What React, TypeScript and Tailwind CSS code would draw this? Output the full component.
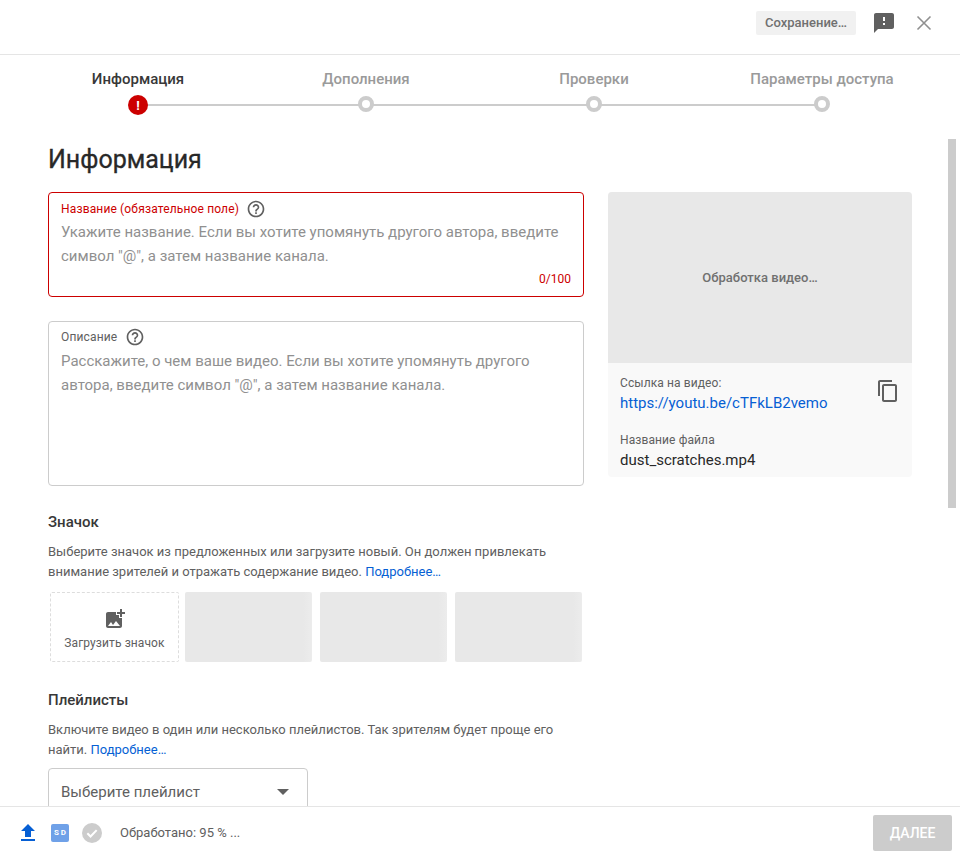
import React from "react";

const steps = ["Информация", "Дополнения", "Проверки", "Параметры доступа"];

function HelpIcon() {
  return (
    <svg width="20" height="20" viewBox="0 0 24 24" fill="#606060">
      <path d="M11 18h2v-2h-2v2zm1-16C6.48 2 2 6.48 2 12s4.48 10 10 10 10-4.48 10-10S17.52 2 12 2zm0 18c-4.41 0-8-3.59-8-8s3.59-8 8-8 8 3.59 8 8-3.59 8-8 8zm0-14c-2.21 0-4 1.79-4 4h2c0-1.1.9-2 2-2s2 .9 2 2c0 2-3 1.75-3 5h2c0-2.25 3-2.5 3-5 0-2.21-1.79-4-4-4z" />
    </svg>
  );
}

function Stepper() {
  return (
    <div className="relative shrink-0 h-[84px] pl-[24px]">
      <div className="absolute left-[138px] top-[49px] w-[684px] h-[2px] bg-[#cccccc]" />
      <div className="relative flex">
        {steps.map((step, i) => (
          <div key={step} className="w-[228px] flex flex-col items-center">
            <div className={`h-[20px] mt-[14px] text-[15px] leading-[20px] font-medium whitespace-nowrap ${i === 0 ? "text-[#383838]" : "text-[#9a9a9a]"}`}>
              {step}
            </div>
            {i === 0 ? (
              <div className="mt-[6px] w-[20px] h-[20px] rounded-full bg-[#cc0000] flex items-center justify-center text-white text-[13px] leading-none font-bold">!</div>
            ) : (
              <div className="mt-[7px] w-[16px] h-[16px] rounded-full border-4 border-[#cccccc] bg-white" />
            )}
          </div>
        ))}
      </div>
    </div>
  );
}

export default function App() {
  return (
    <div className="relative w-[960px] h-[862px] flex flex-col overflow-hidden bg-white font-['Roboto',sans-serif] text-[#282828]">
      {/* top bar */}
      <div className="shrink-0 h-[55px] border-b border-[#e5e5e5] flex items-center justify-end pb-[8px]">
        <div className="w-[100px] h-[24px] mr-[16px] rounded-[2px] bg-[#f1f1f1] text-[#707070] text-[13px] leading-[24px] font-medium text-center">Сохранение…</div>
        <svg className="mr-[16px]" width="24" height="24" viewBox="0 0 24 24" fill="#606060">
          <path d="M20 2H4c-1.1 0-1.99.9-1.99 2L2 22l4-4h14c1.1 0 2-.9 2-2V4c0-1.1-.9-2-2-2zm-7 12h-2v-2h2v2zm0-4h-2V6h2v4z" />
        </svg>
        <svg className="mr-[24px]" width="24" height="24" viewBox="0 0 24 24" stroke="#909090" strokeWidth="1.6" fill="none">
          <path d="M5.5 5.5l13 13M18.5 5.5l-13 13" />
        </svg>
      </div>

      <Stepper />

      {/* form area */}
      <div className="flex-1 min-h-0 overflow-hidden px-[48px]">
        <h1 className="h-[42px] text-[25px] leading-[42px] font-normal [-webkit-text-stroke:0.3px_#282828] text-[#282828]">Информация</h1>
        <div className="mt-[11px] flex gap-[24px]">
          <div className="w-[536px] shrink-0">
            <div className="h-[105px] rounded-[4px] border border-[#cc0000] px-[12px] pt-[6px]">
              <div className="flex items-center h-[20px] text-[12px] tracking-[0.15px] text-[#cc0000]">
                Название (обязательное поле)
                <span className="ml-[7px]"><HelpIcon /></span>
              </div>
              <div className="mt-[1px] text-[15px] leading-[24px] text-[#909090]">
                Укажите название. Если вы хотите упомянуть другого автора, введите символ "@", а затем название канала.
              </div>
              <div className="mt-[4px] text-right text-[12px] leading-[14px] text-[#cc0000]">0/100</div>
            </div>

            <div className="mt-[24px] h-[165px] rounded-[4px] border border-[#cccccc] px-[12px] pt-[5px]">
              <div className="flex items-center h-[20px] text-[12px] tracking-[0.15px] text-[#606060]">
                Описание
                <span className="ml-[8px]"><HelpIcon /></span>
              </div>
              <div className="mt-[2px] text-[15px] leading-[24px] text-[#909090]">
                Расскажите, о чем ваше видео. Если вы хотите упомянуть другого автора, введите символ "@", а затем название канала.
              </div>
            </div>

            <h2 className="mt-[26px] text-[15px] leading-[20px] font-medium text-[#383838]">Значок</h2>
            <p className="mt-[10px] text-[13px] leading-[20px] text-[#606060]">
              Выберите значок из предложенных или загрузите новый. Он должен привлекать внимание зрителей и отражать содержание видео. <span className="text-[#065fd4]">Подробнее…</span>
            </p>
            <div className="mt-[10px] ml-[2px] flex">
              <div className="w-[129px] h-[70px] rounded-[2px] border border-dashed border-[#dddddd] flex flex-col items-center pt-[14px]">
                <svg width="24" height="24" viewBox="0 0 24 24" fill="#606060">
                  <path d="M19 7v2.99s-1.99.01-2 0V7h-3s.01-1.99 0-2h3V2h2v3h3v2h-3zm-3 4V8h-3V5H5c-1.1 0-2 .9-2 2v12c0 1.1.9 2 2 2h12c1.1 0 2-.9 2-2v-8h-3zM5 19l3-4 2 3 3-4 4 5H5z" />
                </svg>
                <div className="mt-[3px] text-[12px] leading-[18px] tracking-[0.1px] text-[#606060]">Загрузить значок</div>
              </div>
              <div className="ml-[6px] w-[127px] h-[70px] rounded-[2px] bg-[linear-gradient(90deg,#e8e8e8_93%,#ececec)]" />
              <div className="ml-[8px] w-[127px] h-[70px] rounded-[2px] bg-[linear-gradient(90deg,#e8e8e8_93%,#ececec)]" />
              <div className="ml-[8px] w-[127px] h-[70px] rounded-[2px] bg-[linear-gradient(90deg,#e8e8e8_93%,#ececec)]" />
            </div>

            <h2 className="mt-[28px] text-[15px] leading-[20px] font-medium text-[#383838]">Плейлисты</h2>
            <p className="mt-[10px] text-[13px] leading-[20px] text-[#606060]">
              Включите видео в один или несколько плейлистов. Так зрителям будет проще его найти. <span className="text-[#065fd4]">Подробнее…</span>
            </p>
            <div className="mt-[8px] w-[260px] h-[48px] rounded-[4px] border border-[#cccccc] flex items-center justify-between pl-[12px] pr-[18px]">
              <span className="text-[15px] text-[#606060]">Выберите плейлист</span>
              <span className="w-0 h-0 border-x-[6px] border-x-transparent border-t-[6px] border-t-[#606060]" />
            </div>
          </div>

          {/* video preview */}
          <div className="w-[304px] h-[285px] shrink-0 rounded-[4px] overflow-hidden bg-[#f9f9f9]">
            <div className="h-[171px] bg-[#e8e8e8] flex items-center justify-center text-[13px] font-medium text-[#707070]">Обработка видео…</div>
            <div className="relative px-[12px] pt-[12px]">
              <div className="text-[12px] leading-[16px] tracking-[0.1px] text-[#606060]">Ссылка на видео:</div>
              <div className="mt-[2px] text-[15px] leading-[20px] text-[#065fd4]">https://youtu.be/cTFkLB2vemo</div>
              <div className="mt-[19px] text-[12px] leading-[16px] tracking-[0.1px] text-[#606060]">Название файла</div>
              <div className="mt-[2px] text-[15px] leading-[20px] text-[#282828]">dust_scratches.mp4</div>
              <svg className="absolute right-[12px] top-[16px]" width="24" height="24" viewBox="0 0 24 24" fill="#606060">
                <path d="M16 1H4c-1.1 0-2 .9-2 2v14h2V3h12V1zm3 4H8c-1.1 0-2 .9-2 2v14c0 1.1.9 2 2 2h11c1.1 0 2-.9 2-2V7c0-1.1-.9-2-2-2zm0 16H8V7h11v14z" />
              </svg>
            </div>
          </div>
        </div>
      </div>

      {/* scrollbar thumb */}
      <div className="absolute left-[948px] top-[139px] w-[8px] h-[369px] bg-[#cccccc]" />

      {/* bottom bar */}
      <div className="relative shrink-0 h-[56px] border-t border-[#e5e5e5] bg-white flex items-center pl-[16px] pr-[8px] pb-[4px]">
        <svg width="24" height="24" viewBox="0 0 24 24" fill="#065fd4">
          <path d="M5 20h14v-2H5v2zM5 10h4v6h6v-6h4l-7-7-7 7z" />
        </svg>
        <div className="ml-[11px] w-[18px] h-[18px] rounded-[2px] bg-[#6fa1e8] flex items-center justify-center text-white text-[8px] leading-none font-bold tracking-[2px] pl-[2px]">SD</div>
        <div className="ml-[13px] w-[20px] h-[20px] rounded-full bg-[#cccccc] flex items-center justify-center">
          <svg width="14" height="14" viewBox="0 0 24 24" fill="none" stroke="#ffffff" strokeWidth="3.5">
            <path d="M4 12.5l5.5 5.5L20 7" />
          </svg>
        </div>
        <div className="ml-[18px] text-[13px] text-[#606060]">Обработано: 95 % ...</div>
        <div className="ml-auto w-[79px] h-[36px] rounded-[2px] bg-[#cccccc] text-white text-[14px] font-medium leading-[36px] text-center">ДАЛЕЕ</div>
      </div>
    </div>
  );
}
